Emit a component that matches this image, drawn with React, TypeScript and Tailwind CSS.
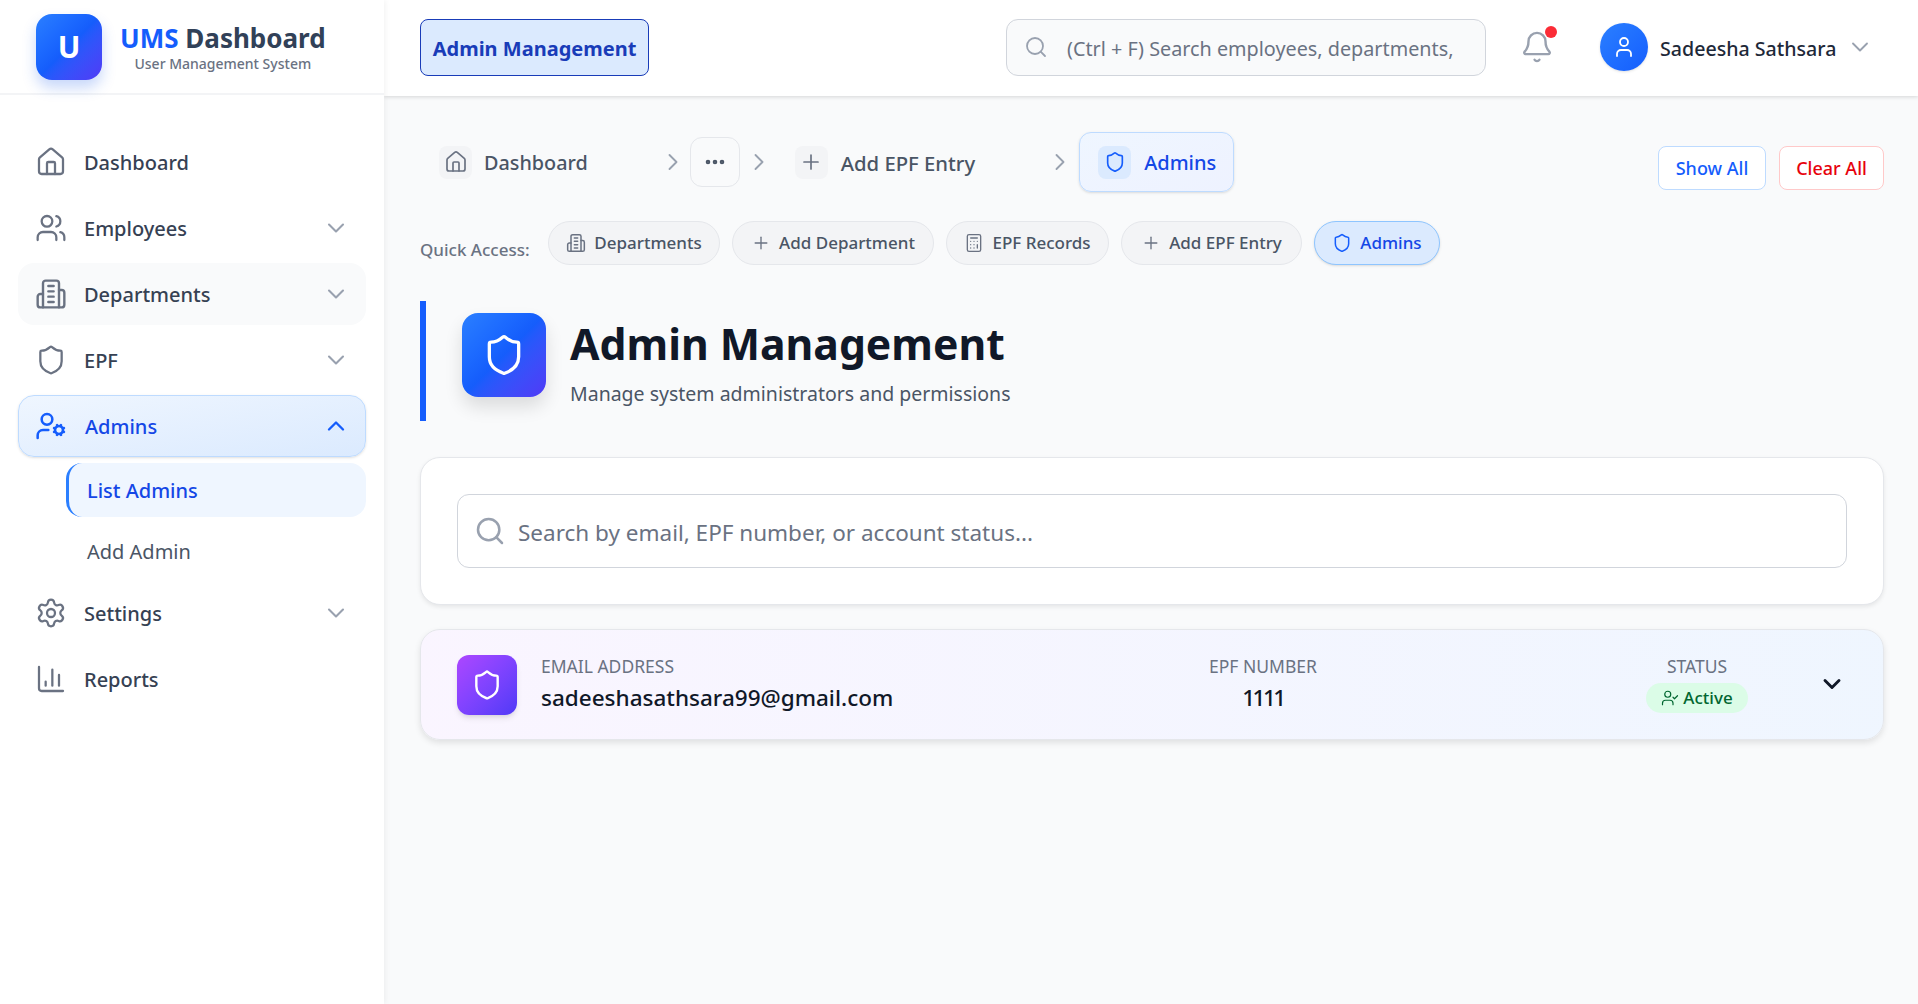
import React from 'react'
import { Home, Users, Shield, UserCog, Settings, ChartColumn, ChevronDown, ChevronUp, ChevronRight, Search, Bell, User, Plus, Ellipsis, Calculator, UserCheck } from 'lucide-react'

const Dept = ({ className }: { className?: string }) => (
  <svg viewBox="0 0 24 24" fill="none" stroke="currentColor" strokeWidth="1.8" strokeLinecap="round" strokeLinejoin="round" className={className}>
    <path d="M6 22V4a2 2 0 0 1 2-2h8a2 2 0 0 1 2 2v18Z" />
    <path d="M6 12H4a2 2 0 0 0-2 2v6a2 2 0 0 0 2 2h2" />
    <path d="M18 9h2a2 2 0 0 1 2 2v9a2 2 0 0 1-2 2h-2" />
    <path d="M10 6h4M10 10h4M10 14h4M10 18h4" />
  </svg>
)

const navTop = [
  { label: 'Dashboard', icon: Home, arrow: false, hover: false },
  { label: 'Employees', icon: Users, arrow: true, hover: false },
  { label: 'Departments', icon: Dept, arrow: true, hover: true },
  { label: 'EPF', icon: Shield, arrow: true, hover: false },
]

const navBottom = [
  { label: 'Settings', icon: Settings, arrow: true },
  { label: 'Reports', icon: ChartColumn, arrow: false },
]

const pills = [
  { label: 'Departments', icon: Dept, w: 'w-[172px]' },
  { label: 'Add Department', icon: Plus, w: 'w-[202px]' },
  { label: 'EPF Records', icon: Calculator, w: 'w-[163px]' },
  { label: 'Add EPF Entry', icon: Plus, w: 'w-[181px]' },
]

const NavRow = ({ item }: { item: { label: string; icon: React.ElementType; arrow: boolean; hover?: boolean } }) => {
  const Icon = item.icon
  return (
    <div className={`h-[62px] rounded-2xl pl-[17px] pr-[16px] flex items-center ${item.hover ? 'bg-gray-50' : ''}`}>
      <Icon className="w-[32px] h-[32px] text-gray-500" strokeWidth={1.7} />
      <span className="ml-[17px] mt-[2px] text-[20px] font-medium text-gray-700">{item.label}</span>
      {item.arrow && <ChevronDown className="ml-auto w-[28px] h-[28px] text-gray-400" strokeWidth={1.8} />}
    </div>
  )
}

export default function App() {
  return (
    <div className="w-[1918px] h-[1004px] flex overflow-hidden bg-gray-50 font-['Noto_Sans',sans-serif]">
      <aside className="w-[384px] shrink-0 bg-white shadow-[1px_0_6px_rgba(0,0,0,0.06)] z-20">
        <div className="h-[95px] border-b-2 border-gray-100 pl-[36px] flex items-center">
          <div className="w-[66px] h-[66px] rounded-2xl bg-gradient-to-br from-blue-500 via-blue-600 to-indigo-600 shadow-[0_8px_14px_rgba(37,99,235,0.25)] flex items-center justify-center text-white font-bold text-[30px]">U</div>
          <div className="ml-[18px] flex flex-col items-center">
            <div className="text-[26px] leading-[34px] font-bold"><span className="text-blue-600">UMS</span> <span className="text-slate-700">Dashboard</span></div>
            <div className="text-[14px] leading-[18px] font-medium text-gray-500">User Management System</div>
          </div>
        </div>
        <nav className="pt-[36px] px-[18px] flex flex-col gap-[4px]">
          {navTop.map((item) => <NavRow key={item.label} item={item} />)}
          <div className="h-[62px] rounded-2xl pl-[16px] pr-[15px] flex items-center bg-gradient-to-br from-blue-50 to-blue-100 border border-blue-200 shadow-sm">
            <UserCog className="w-[32px] h-[32px] text-blue-600" strokeWidth={1.9} />
            <span className="ml-[18px] mt-[2px] text-[20px] font-medium text-blue-700">Admins</span>
            <ChevronUp className="ml-auto w-[28px] h-[28px] text-blue-600" strokeWidth={2} />
          </div>
          <div className="mt-[2px] ml-[48px] flex flex-col gap-[7px]">
            <div className="h-[54px] rounded-2xl border-l-[3px] border-blue-500 bg-blue-50 pl-[18px] flex items-center text-[20px] font-medium text-blue-700"><span className="mt-[2px]">List Admins</span></div>
            <div className="h-[54px] pl-[21px] flex items-center text-[20px] text-gray-600"><span className="mt-[2px]">Add Admin</span></div>
          </div>
          {navBottom.map((item) => <NavRow key={item.label} item={item} />)}
        </nav>
      </aside>

      <div className="flex-1 flex flex-col min-w-0">
        <header className="h-[96px] pb-[2px] bg-white shadow-[0_1px_4px_rgba(0,0,0,0.15)] pl-[36px] flex items-center z-10">
          <div className="w-[229px] h-[57px] rounded-lg bg-blue-100 border border-blue-800 flex items-center justify-center text-[20px] font-bold text-blue-800"><span className="mt-[3px]">Admin Management</span></div>
          <div className="ml-[357px] w-[480px] h-[57px] rounded-xl bg-gray-50 border border-gray-300 flex items-center pl-[17px] overflow-hidden">
            <Search className="w-[24px] h-[24px] text-gray-400 shrink-0" strokeWidth={1.8} />
            <span className="ml-[19px] mt-[3px] text-[19.8px] text-gray-500 whitespace-nowrap">(Ctrl + F) Search employees, departments,</span>
          </div>
          <div className="relative ml-[35px] w-[32px] h-[32px] flex items-center justify-center">
            <Bell className="w-[34px] h-[34px] shrink-0 text-gray-400" strokeWidth={1.7} />
            <span className="absolute -top-[5px] right-[-4px] w-[12px] h-[12px] rounded-full bg-red-500" />
          </div>
          <div className="ml-[47px] w-[48px] h-[48px] rounded-full bg-gradient-to-br from-blue-500 to-blue-600 shadow-sm flex items-center justify-center">
            <User className="w-[24px] h-[24px] text-white" strokeWidth={1.8} />
          </div>
          <span className="ml-[12px] mt-[3px] text-[19.6px] font-medium text-gray-800 whitespace-nowrap">Sadeesha Sathsara</span>
          <ChevronDown className="ml-[10px] w-[28px] h-[28px] text-gray-400" strokeWidth={1.6} />
        </header>

        <main className="flex-1 pl-[36px] pr-[34px]">
          <div className="mt-[36px] h-[60px] flex items-center">
            <div className="ml-[19px] w-[33px] h-[33px] rounded-lg bg-gray-100 flex items-center justify-center"><Home className="w-[24px] h-[24px] text-gray-500" strokeWidth={1.7} /></div>
            <span className="ml-[12px] mt-[2px] text-[19.8px] font-medium text-gray-600">Dashboard</span>
            <ChevronRight className="ml-[71px] w-[28px] h-[28px] text-gray-400" strokeWidth={1.6} />
            <div className="ml-[3px] w-[50px] h-[50px] rounded-xl border border-gray-200 flex items-center justify-center"><Ellipsis className="w-[24px] h-[24px] text-gray-600" strokeWidth={2.6} /></div>
            <ChevronRight className="ml-[5px] w-[28px] h-[28px] text-gray-400" strokeWidth={1.6} />
            <div className="ml-[22px] w-[33px] h-[33px] rounded-lg bg-gray-100 flex items-center justify-center"><Plus className="w-[24px] h-[24px] text-gray-500" strokeWidth={1.7} /></div>
            <span className="ml-[13px] mt-[2px] text-[20.3px] font-medium text-gray-600">Add EPF Entry</span>
            <ChevronRight className="ml-[71px] w-[28px] h-[28px] text-gray-400" strokeWidth={1.6} />
            <div className="ml-[5px] w-[155px] h-[60px] rounded-xl bg-gradient-to-br from-blue-50 to-indigo-50 border border-blue-200 shadow-sm flex items-center pl-[18px]">
              <div className="w-[33px] h-[33px] rounded-lg bg-blue-100 flex items-center justify-center"><Shield className="w-[22px] h-[22px] text-blue-600" strokeWidth={1.8} /></div>
              <span className="ml-[13px] mt-[2px] text-[20px] font-medium text-blue-700">Admins</span>
            </div>
            <div className="ml-auto flex gap-[13px] self-end mb-[2px]">
              <div className="w-[108px] h-[44px] rounded-lg bg-white border border-blue-200 flex items-center justify-center text-[18px] font-medium text-blue-600">Show All</div>
              <div className="w-[105px] h-[44px] rounded-lg bg-white border border-red-200 flex items-center justify-center text-[18px] font-medium text-red-600">Clear All</div>
            </div>
          </div>

          <div className="mt-[29px] flex items-center">
            <span className="w-[128px] mt-[13px] text-[17px] font-medium text-gray-500">Quick Access:</span>
            <div className="flex gap-[12px]">
              {pills.map((pill) => {
                const Icon = pill.icon
                return (
                  <div key={pill.label} className={`${pill.w} h-[44px] rounded-full bg-gray-100 border border-gray-200 flex items-center justify-center text-[17px] font-medium text-gray-600`}>
                    <Icon className="w-[20px] h-[20px] text-gray-500 mr-[8px]" strokeWidth={1.6} />
                    {pill.label}
                  </div>
                )
              })}
              <div className="w-[126px] h-[44px] rounded-full bg-blue-100 border border-blue-300 shadow-sm flex items-center justify-center text-[17px] font-medium text-blue-700">
                <Shield className="w-[20px] h-[20px] text-blue-600 mr-[8px]" strokeWidth={1.8} />
                Admins
              </div>
            </div>
          </div>

          <div className="mt-[36px] h-[120px] border-l-[6px] border-blue-600 pl-[36px] flex items-start">
            <div className="mt-[12px] w-[84px] h-[84px] rounded-2xl bg-gradient-to-br from-blue-500 via-blue-600 to-indigo-600 shadow-[0_10px_18px_rgba(0,0,0,0.12)] flex items-center justify-center">
              <Shield className="w-[44px] h-[44px] text-white" strokeWidth={1.8} />
            </div>
            <div className="ml-[24px] mt-[15px]">
              <h1 className="text-[42.7px] leading-[56px] font-bold text-gray-900">Admin Management</h1>
              <p className="mt-[7px] text-[19.5px] leading-[30px] text-gray-600">Manage system administrators and permissions</p>
            </div>
          </div>

          <div className="mt-[36px] h-[148px] rounded-[20px] bg-white border border-gray-200 shadow-[0_2px_4px_rgba(0,0,0,0.08)] px-[36px] flex items-center">
            <div className="w-full h-[74px] rounded-xl border border-gray-300 flex items-center pl-[16px]">
              <Search className="w-[32px] h-[32px] text-gray-400" strokeWidth={1.9} />
              <span className="ml-[12px] mt-[3px] text-[22.5px] text-gray-500">Search by email, EPF number, or account status...</span>
            </div>
          </div>

          <div className="mt-[24px] h-[111px] rounded-[20px] bg-gradient-to-r from-purple-50 to-blue-50 border border-gray-200 shadow-[0_3px_6px_rgba(0,0,0,0.1)] px-[36px] flex items-center">
            <div className="w-[706px] flex items-center">
              <div className="w-[60px] h-[60px] rounded-xl bg-gradient-to-br from-purple-500 to-indigo-600 shadow-md flex items-center justify-center">
                <Shield className="w-[32px] h-[32px] text-white" strokeWidth={1.8} />
              </div>
              <div className="ml-[24px] mb-[2px]">
                <div className="text-[17.5px] leading-[24px] text-gray-500">EMAIL ADDRESS</div>
                <div className="mt-[4px] text-[22.5px] leading-[32px] font-medium text-gray-900">sadeeshasathsara99@gmail.com</div>
              </div>
            </div>
            <div className="w-[200px] mb-[2px] text-center">
              <div className="text-[17.5px] leading-[24px] text-gray-500">EPF NUMBER</div>
              <div className="mt-[4px] text-[22.5px] leading-[32px] font-medium tracking-[-2.5px] text-gray-900">1111</div>
            </div>
            <div className="ml-[234px] w-[200px] mb-[2px] flex flex-col items-center">
              <div className="text-[17.5px] leading-[24px] text-gray-500">STATUS</div>
              <div className="mt-[5px] w-[102px] h-[30px] rounded-full bg-green-100 flex items-center justify-center text-[17px] font-medium text-green-800">
                <UserCheck className="w-[18px] h-[18px] mr-[4px]" strokeWidth={1.6} />
                Active
              </div>
            </div>
            <ChevronDown className="ml-auto mr-[1px] mb-[2px] w-[28px] h-[28px] text-gray-900" strokeWidth={2.5} />
          </div>
        </main>
      </div>
    </div>
  )
}
